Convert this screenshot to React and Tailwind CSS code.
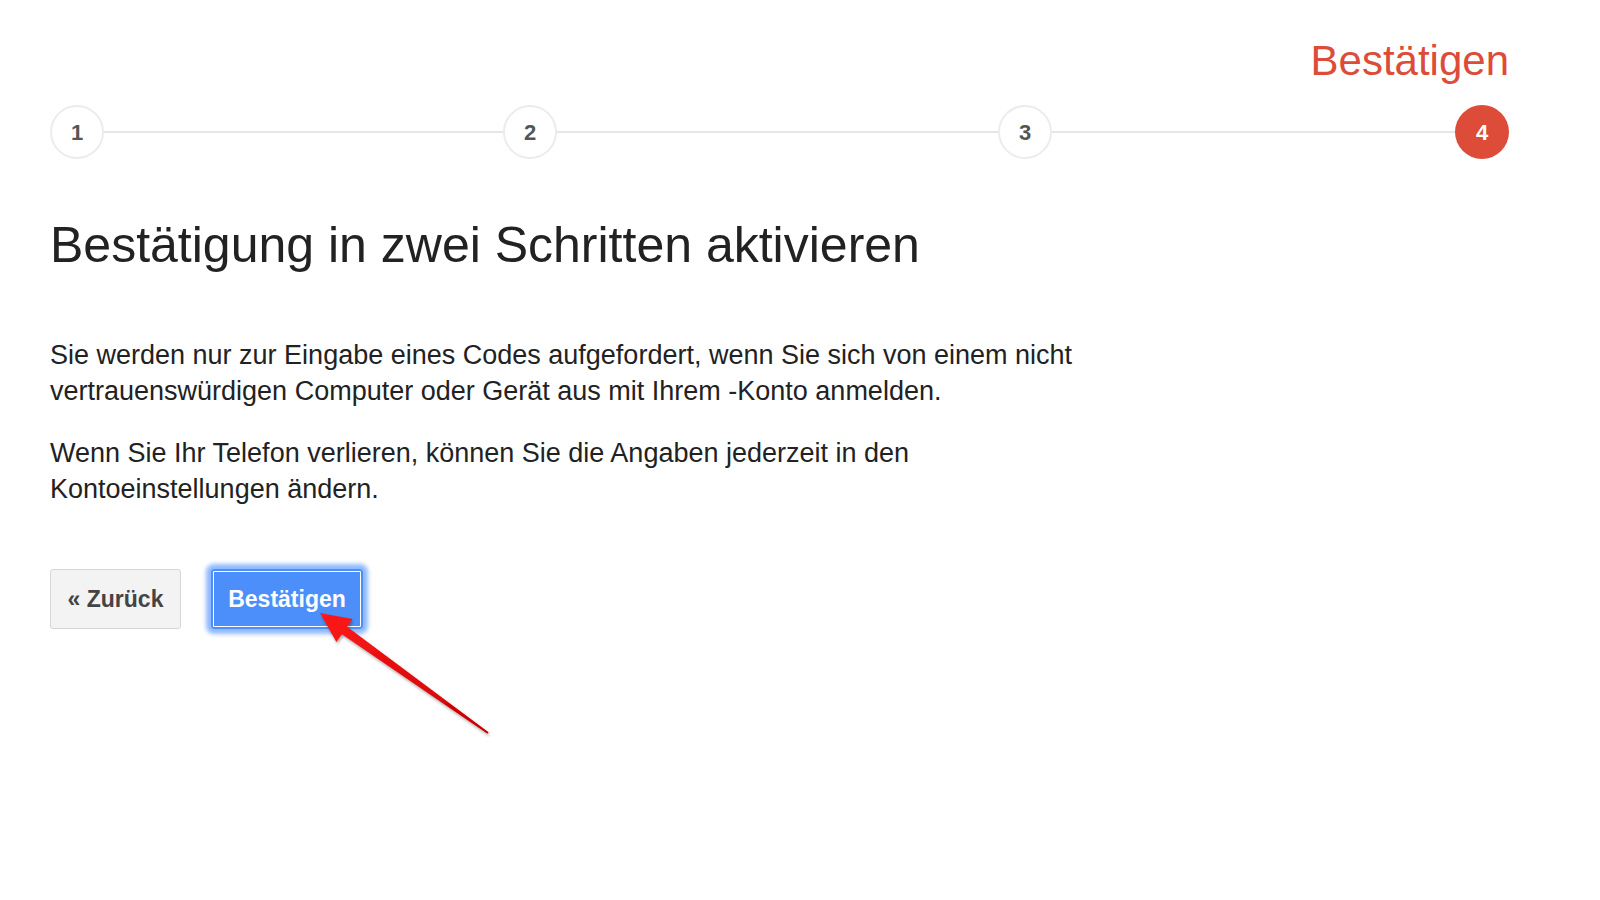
import React from "react";

const steps = [
  { n: 1, gap: 399 },
  { n: 2, gap: 441 },
  { n: 3, gap: 403 },
  { n: 4, active: true },
];

function StepDot({ n, active }) {
  return (
    <div
      className={
        active
          ? "w-[54px] h-[54px] rounded-full bg-[#dd4b39] text-white flex items-center justify-center text-[22px] font-bold shrink-0"
          : "w-[54px] h-[54px] rounded-full bg-white border-2 border-[#ececec] text-[#555] flex items-center justify-center text-[22px] font-bold shrink-0"
      }
    >
      {n}
    </div>
  );
}

// Roter Pfeil als Hinweis auf den Button
function Pointer() {
  return (
    <svg className="absolute left-0 top-0 pointer-events-none" width="600" height="800" viewBox="0 0 600 800">
      <defs>
        <linearGradient id="pfeil" x1="0" y1="0" x2="1" y2="1">
          <stop offset="0" stopColor="#ff1a1a" />
          <stop offset="1" stopColor="#c40000" />
        </linearGradient>
        <filter id="schatten" x="-20%" y="-20%" width="140%" height="140%">
          <feDropShadow dx="1" dy="2" stdDeviation="1.5" floodColor="#000" floodOpacity="0.35" />
        </filter>
      </defs>
      <polygon
        points="320,613 352.6,619.1 347.1,626.8 488.6,732.2 487.4,733.8 341.9,634.2 336.4,641.9"
        fill="url(#pfeil)"
        filter="url(#schatten)"
      />
    </svg>
  );
}

export default function App() {
  return (
    <div className="relative w-[1600px] h-[900px] bg-white overflow-hidden font-['Liberation_Sans',Arial,sans-serif]">
      <div className="pl-[50px] pt-[37px] w-[1509px]">
        {/* Schrittanzeige */}
        <div className="text-right text-[42px] leading-[48px] text-[#dd4b39]">Bestätigen</div>
        <div className="flex items-center mt-[20px]">
          {steps.map(s => (
            <React.Fragment key={s.n}>
              <StepDot n={s.n} active={s.active} />
              {s.gap && <div className="h-[2px] bg-[#e6e6e6]" style={{ width: s.gap }} />}
            </React.Fragment>
          ))}
        </div>

        <h1 className="mt-[56px] text-[50px] leading-[60px] text-[#222]">
          Bestätigung in zwei Schritten aktivieren
        </h1>

        <div className="max-w-[1085px] text-[27px] leading-[36px] text-[#222]">
          <p className="mt-[62px]">
            Sie werden nur zur Eingabe eines Codes aufgefordert, wenn Sie sich von einem nicht vertrauenswürdigen Computer oder Gerät aus mit Ihrem -Konto anmelden.
          </p>
          <p className="mt-[26px]">
            Wenn Sie Ihr Telefon verlieren, können Sie die Angaben jederzeit in den Kontoeinstellungen ändern.
          </p>
        </div>

        <div className="flex items-center gap-[30px] mt-[62px]">
          <button className="w-[131px] h-[60px] rounded-[3px] border border-[#d6d6d6] bg-[#f3f3f3] text-[#444] text-[23px] font-bold">
            « Zurück
          </button>
          <button className="w-[152px] h-[60px] rounded-[3px] bg-[#4d8ffa] text-white text-[23px] font-bold shadow-[inset_0_0_0_2px_#4d8ffa,inset_0_0_0_3px_#ffffff,0_0_4px_5px_#8fbaff]">
            Bestätigen
          </button>
        </div>
      </div>
      <Pointer />
    </div>
  );
}
